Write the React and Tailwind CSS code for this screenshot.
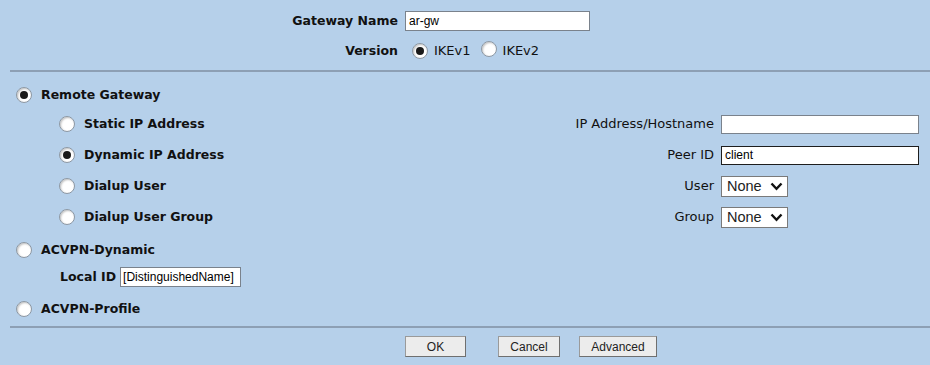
import React from "react";

const bold = "font-['DejaVu_Sans',Verdana,sans-serif] font-bold text-[12.5px] text-[#111]";
const norm = "font-['DejaVu_Sans',Verdana,sans-serif] text-[13px] text-[#111]";
const inputFont = "font-['Liberation_Sans',Arial,sans-serif] text-[12px] text-black";

function Radio({ checked }) {
  return (
    <span className="inline-flex items-center justify-center w-[16px] h-[16px] rounded-full border border-[#8c97a3] bg-white shadow-[inset_1px_1px_2px_rgba(0,0,0,0.25)] shrink-0">
      {checked && <span className="w-[8px] h-[8px] rounded-full bg-[#1a1a1a]" />}
    </span>
  );
}

function Select() {
  return (
    <div className="flex items-center w-[67px] h-[21px] bg-white border border-[#7a7a7a] pl-[5px]">
      <span className="font-['Liberation_Sans',Arial,sans-serif] text-[14.5px] text-[#222] leading-none">None</span>
      <svg className="ml-[8px]" width="13" height="9" viewBox="0 0 13 9">
        <path d="M1.5 1.5 L6.5 6.8 L11.5 1.5" fill="none" stroke="#111" strokeWidth="2.4" />
      </svg>
    </div>
  );
}

function Btn({ children, w }) {
  return (
    <div className={`flex items-center justify-center h-[21px] ${w} bg-[#ececec] border border-[#9a9a9a] border-r-[#6f6f6f] border-b-[#6f6f6f] font-['Liberation_Sans',Arial,sans-serif] text-[12px] text-[#222]`}>
      {children}
    </div>
  );
}

function Row({ h, mt, left, label, control }) {
  return (
    <div className={`flex items-center ${h} ${mt}`}>
      <div className="w-[560px] flex items-center">{left}</div>
      {label && (
        <>
          <div className={`w-[154px] text-right ${norm}`}>{label}</div>
          <div className="ml-[7px]">{control}</div>
        </>
      )}
    </div>
  );
}

export default function App() {
  return (
    <div className="w-[930px] h-[365px] bg-[#b6d0ea] overflow-hidden">
      {/* top */}
      <div className="pt-[11px]">
        <div className="flex items-center h-[20px]">
          <div className={`w-[398px] text-right ${bold}`}>Gateway Name</div>
          <div className={`ml-[7px] w-[185px] h-[20px] bg-white border border-[#7a828c] flex items-center pl-[3px] ${inputFont}`}>ar-gw</div>
        </div>
        <div className="flex items-center h-[20px] mt-[10px]">
          <div className={`w-[398px] text-right ${bold}`}>Version</div>
          <div className="ml-[14px] flex items-center">
            <Radio checked />
            <span className={`ml-[6px] ${norm}`}>IKEv1</span>
            <span className="ml-[10px]"><Radio /></span>
            <span className={`ml-[6px] ${norm}`}>IKEv2</span>
          </div>
        </div>
      </div>
      <div className="mt-[9px] ml-[10px] h-[2px] bg-[#8d9fb4]" />

      {/* body */}
      <div>
        <Row h="h-[20px]" mt="mt-[13px]" left={<div className="ml-[16px] flex items-center"><Radio checked /><span className={`ml-[9px] ${bold}`}>Remote Gateway</span></div>} />
        <Row
          h="h-[20px]"
          mt="mt-[9px]"
          left={<div className="ml-[59px] flex items-center"><Radio /><span className={`ml-[9px] ${bold}`}>Static IP Address</span></div>}
          label="IP Address/Hostname"
          control={<div className="w-[198px] h-[19px] bg-white border border-[#7a828c]" />}
        />
        <Row
          h="h-[20px]"
          mt="mt-[11px]"
          left={<div className="ml-[59px] flex items-center"><Radio checked /><span className={`ml-[9px] ${bold}`}>Dynamic IP Address</span></div>}
          label="Peer ID"
          control={<div className={`w-[198px] h-[19px] bg-white border border-[#1e1e1e] flex items-center pl-[3px] ${inputFont}`}>client</div>}
        />
        <Row
          h="h-[20px]"
          mt="mt-[11px]"
          left={<div className="ml-[59px] flex items-center"><Radio /><span className={`ml-[9px] ${bold}`}>Dialup User</span></div>}
          label="User"
          control={<Select />}
        />
        <Row
          h="h-[20px]"
          mt="mt-[11px]"
          left={<div className="ml-[59px] flex items-center"><Radio /><span className={`ml-[9px] ${bold}`}>Dialup User Group</span></div>}
          label="Group"
          control={<Select />}
        />
        <Row h="h-[20px]" mt="mt-[13px]" left={<div className="ml-[16px] flex items-center"><Radio /><span className={`ml-[9px] ${bold}`}>ACVPN-Dynamic</span></div>} />
        <Row
          h="h-[20px]"
          mt="mt-[7px]"
          left={
            <div className="ml-[60px] flex items-center">
              <span className={bold}>Local ID</span>
              <div className={`ml-[4px] w-[121px] h-[20px] bg-white border border-[#7a828c] flex items-center pl-[2px] ${inputFont}`}>[DistinguishedName]</div>
            </div>
          }
        />
        <Row h="h-[20px]" mt="mt-[12px]" left={<div className="ml-[16px] flex items-center"><Radio /><span className={`ml-[9px] ${bold}`}>ACVPN-Profile</span></div>} />
      </div>
      <div className="mt-[7px] ml-[10px] h-[2px] bg-[#8d9fb4]" />

      <div className="flex items-center mt-[8px] ml-[405px]">
        <Btn w="w-[61px]">OK</Btn>
        <div className="ml-[32px]"><Btn w="w-[62px]">Cancel</Btn></div>
        <div className="ml-[19px]"><Btn w="w-[78px]">Advanced</Btn></div>
      </div>
    </div>
  );
}
